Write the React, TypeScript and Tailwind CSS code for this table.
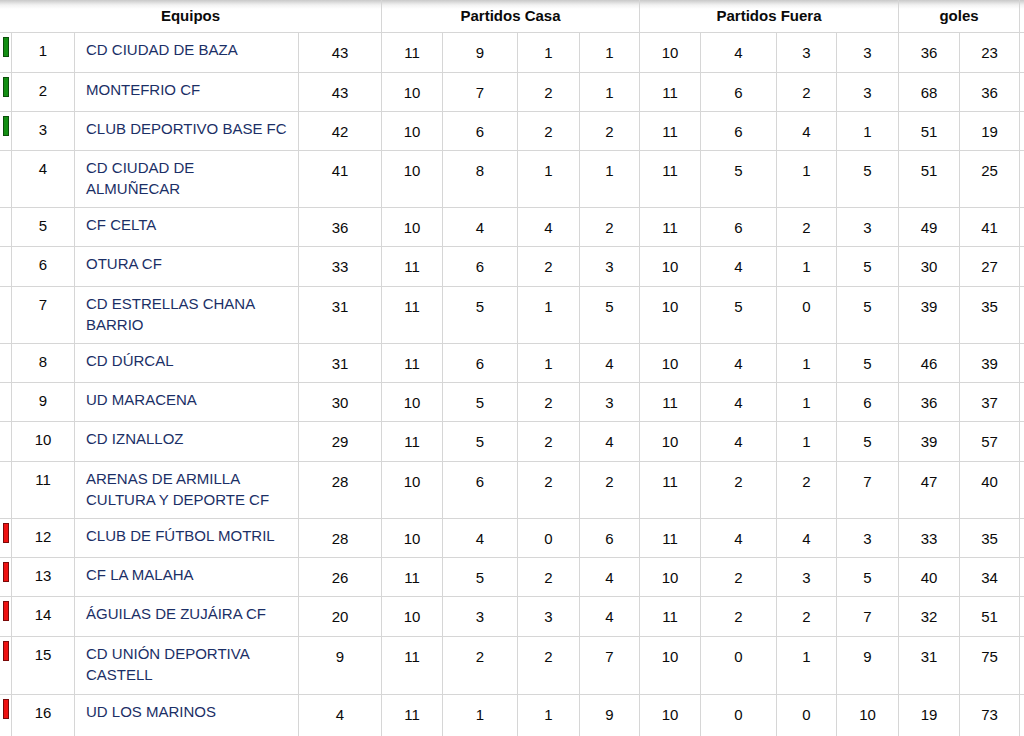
import React from "react";

type Row = {
  pos: number;
  team: string[];
  pts: number;
  casa: number[];
  fuera: number[];
  goles: number[];
  mark?: "up" | "down";
  h: string;
};

const rows: Row[] = [
  { pos: 1, team: ["CD CIUDAD DE BAZA"], pts: 43, casa: [11, 9, 1, 1], fuera: [10, 4, 3, 3], goles: [36, 23], mark: "up", h: "h-[40px]" },
  { pos: 2, team: ["MONTEFRIO CF"], pts: 43, casa: [10, 7, 2, 1], fuera: [11, 6, 2, 3], goles: [68, 36], mark: "up", h: "h-[39px]" },
  { pos: 3, team: ["CLUB DEPORTIVO BASE FC"], pts: 42, casa: [10, 6, 2, 2], fuera: [11, 6, 4, 1], goles: [51, 19], mark: "up", h: "h-[39px]" },
  { pos: 4, team: ["CD CIUDAD DE", "ALMUÑECAR"], pts: 41, casa: [10, 8, 1, 1], fuera: [11, 5, 1, 5], goles: [51, 25], h: "h-[57px]" },
  { pos: 5, team: ["CF CELTA"], pts: 36, casa: [10, 4, 4, 2], fuera: [11, 6, 2, 3], goles: [49, 41], h: "h-[39px]" },
  { pos: 6, team: ["OTURA CF"], pts: 33, casa: [11, 6, 2, 3], fuera: [10, 4, 1, 5], goles: [30, 27], h: "h-[40px]" },
  { pos: 7, team: ["CD ESTRELLAS CHANA", "BARRIO"], pts: 31, casa: [11, 5, 1, 5], fuera: [10, 5, 0, 5], goles: [39, 35], h: "h-[57px]" },
  { pos: 8, team: ["CD DÚRCAL"], pts: 31, casa: [11, 6, 1, 4], fuera: [10, 4, 1, 5], goles: [46, 39], h: "h-[39px]" },
  { pos: 9, team: ["UD MARACENA"], pts: 30, casa: [10, 5, 2, 3], fuera: [11, 4, 1, 6], goles: [36, 37], h: "h-[39px]" },
  { pos: 10, team: ["CD IZNALLOZ"], pts: 29, casa: [11, 5, 2, 4], fuera: [10, 4, 1, 5], goles: [39, 57], h: "h-[40px]" },
  { pos: 11, team: ["ARENAS DE ARMILLA", "CULTURA Y DEPORTE CF"], pts: 28, casa: [10, 6, 2, 2], fuera: [11, 2, 2, 7], goles: [47, 40], h: "h-[57px]" },
  { pos: 12, team: ["CLUB DE FÚTBOL MOTRIL"], pts: 28, casa: [10, 4, 0, 6], fuera: [11, 4, 4, 3], goles: [33, 35], mark: "down", h: "h-[39px]" },
  { pos: 13, team: ["CF LA MALAHA"], pts: 26, casa: [11, 5, 2, 4], fuera: [10, 2, 3, 5], goles: [40, 34], mark: "down", h: "h-[39px]" },
  { pos: 14, team: ["ÁGUILAS DE ZUJÁIRA CF"], pts: 20, casa: [10, 3, 3, 4], fuera: [11, 2, 2, 7], goles: [32, 51], mark: "down", h: "h-[40px]" },
  { pos: 15, team: ["CD UNIÓN DEPORTIVA", "CASTELL"], pts: 9, casa: [11, 2, 2, 7], fuera: [10, 0, 1, 9], goles: [31, 75], mark: "down", h: "h-[58px]" },
  { pos: 16, team: ["UD LOS MARINOS"], pts: 4, casa: [11, 1, 1, 9], fuera: [10, 0, 0, 10], goles: [19, 73], mark: "down", h: "h-[44px]" },
];

const cols =
  "grid grid-cols-[12px_63px_224px_83px_61px_75px_62px_60px_61px_76px_60px_62px_61px_60px_4px]";
const cell = "border-r border-b border-[#d6d6d6]";

function Num({ v }: { v: number }) {
  return <div className={`${cell} pt-[9px] text-center leading-[21px]`}>{v}</div>;
}

export default function App() {
  return (
    <div
      className="w-[1024px] h-[736px] overflow-hidden bg-white text-[15px] text-[#0a0a0a]"
      style={{ fontFamily: '"Liberation Sans", Arial, sans-serif' }}
    >
      {/* cabecera */}
      <div className="grid grid-cols-[382px_258px_259px_121px_4px] h-[33px] bg-[linear-gradient(to_bottom,#c9c9c9_0px,#f2f2f2_5px,#ffffff_9px)] font-bold text-[15px]">
        <div className={`${cell} flex items-center justify-center`}>Equipos</div>
        <div className={`${cell} flex items-center justify-center`}>Partidos Casa</div>
        <div className={`${cell} flex items-center justify-center`}>Partidos Fuera</div>
        <div className={`${cell} flex items-center justify-center`}>goles</div>
        <div className="border-b border-[#d6d6d6]" />
      </div>

      {rows.map((r) => (
        <div key={r.pos} className={`${cols} ${r.h}`}>
          <div className={`${cell} pt-[4px] pl-[3px]`}>
            {r.mark === "up" && (
              <div className="w-[6px] h-[20px] bg-[#138f13] border border-[#0b4f0b]" />
            )}
            {r.mark === "down" && (
              <div className="w-[6px] h-[20px] bg-[#ee1111] border border-[#7a0a0a]" />
            )}
          </div>
          <div className={`${cell} pt-[7px] text-center leading-[21px]`}>{r.pos}</div>
          <div className={`${cell} pt-[6px] pl-[11px] leading-[21px] text-[#1b2f66]`}>
            {r.team.map((t) => (
              <div key={t}>{t}</div>
            ))}
          </div>
          <Num v={r.pts} />
          {r.casa.map((v, i) => (
            <Num key={"c" + i} v={v} />
          ))}
          {r.fuera.map((v, i) => (
            <Num key={"f" + i} v={v} />
          ))}
          {r.goles.map((v, i) => (
            <Num key={"g" + i} v={v} />
          ))}
          <div className="border-b border-[#d6d6d6]" />
        </div>
      ))}
    </div>
  );
}
